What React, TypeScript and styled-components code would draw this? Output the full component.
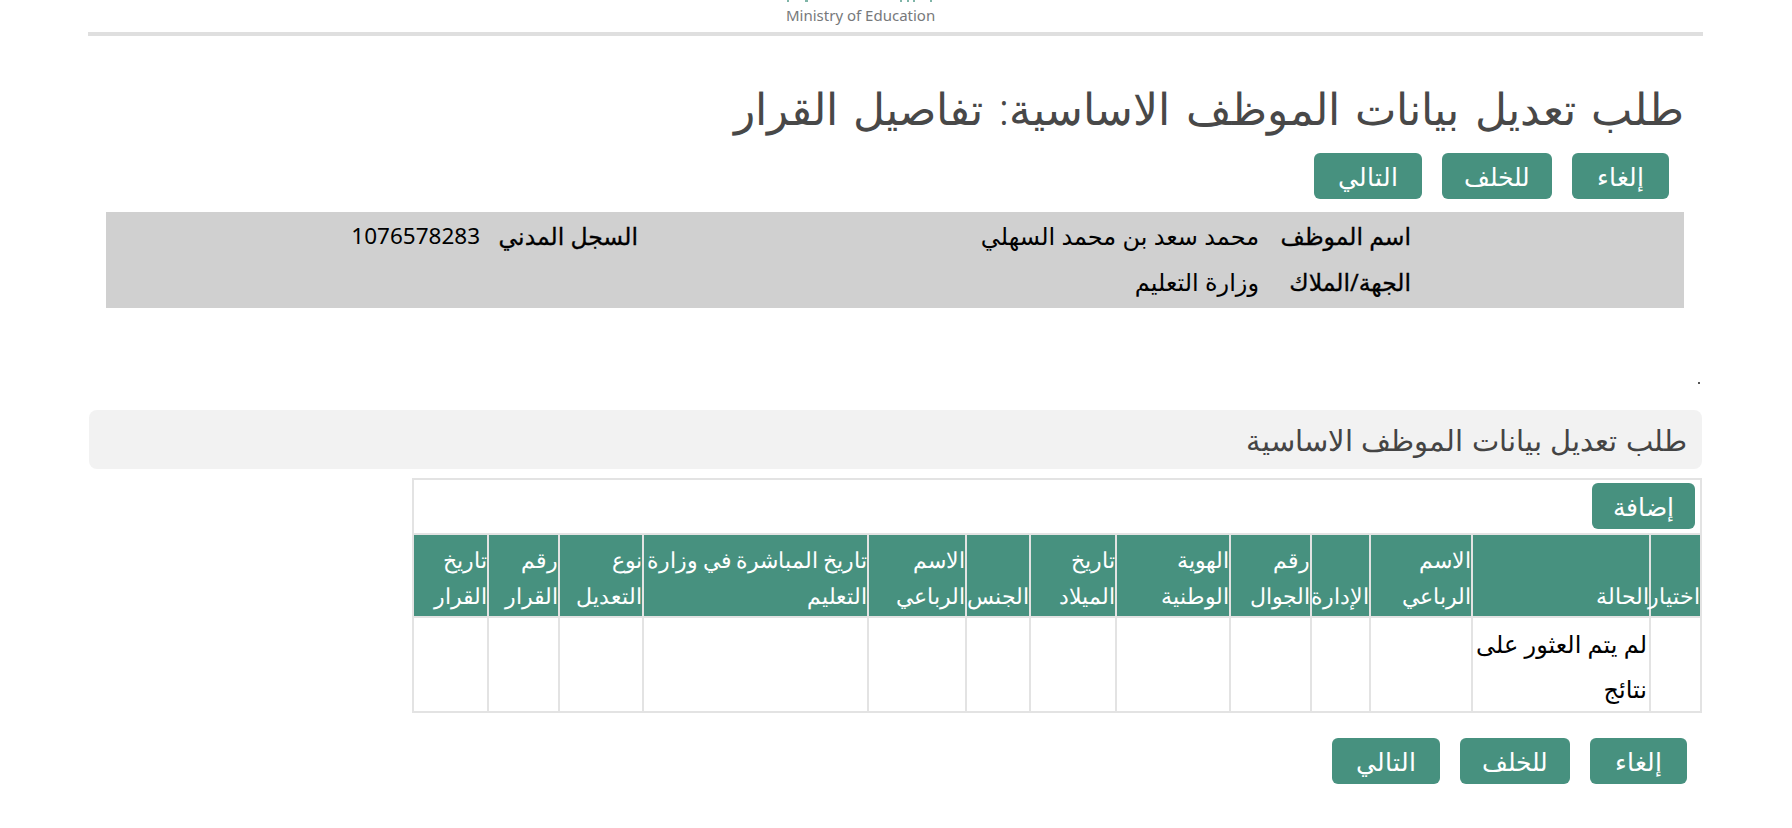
import { createGlobalStyle } from "styled-components";
import styled from "styled-components";

const GlobalStyle = createGlobalStyle`
  html, body {
    margin: 0;
    padding: 0;
    background: #fff;
  }
  body {
    font-family: "Noto Sans", "DejaVu Sans", sans-serif;
    color: #000;
  }
`;

const GREEN = "#47917f";
const LINE = "#e3e3e3";

const Page = styled.div`
  width: 1792px;
  height: 828px;
  overflow: hidden;
  box-sizing: border-box;
  padding: 0 89px 0 88px;
  direction: rtl;
`;

const Masthead = styled.header`
  height: 32px;
  border-bottom: 4px solid #dfdfdf;
  position: relative;
  direction: ltr;
  text-align: center;
`;

const LogoTops = styled.svg`
  display: block;
  position: absolute;
  left: 698px;
  top: 0;
`;

const Ministry = styled.span`
  position: absolute;
  left: 698px;
  top: 4px;
  width: 148px;
  font-size: 15px;
  line-height: 22px;
  color: #77797b;
  white-space: nowrap;
`;

const Title = styled.h1`
  margin: 45px 19px 0 0;
  height: 57px;
  font-size: 44px;
  word-spacing: 4px;
  line-height: 54px;
  font-weight: 300;
  color: #484848;
  white-space: nowrap;
`;

const ButtonRow = styled.div<{ $side: number; $gap: number }>`
  display: flex;
  gap: ${(p) => p.$gap}px;
  padding-right: ${(p) => p.$side}px;
`;

const TopButtons = styled(ButtonRow)`
  margin-top: 15px;
`;

const BottomButtons = styled(ButtonRow)`
  margin-top: 25px;
`;

const Btn = styled.button<{ $w: number }>`
  width: ${(p) => p.$w}px;
  height: 46px;
  padding: 0;
  border: 0;
  border-radius: 6px;
  background: ${GREEN};
  color: #fff;
  font-family: inherit;
  font-size: 25px;
  font-weight: 300;
  line-height: 46px;
`;

const InfoBar = styled.div`
  margin: 13px 19px 0 18px;
  height: 96px;
  background: #d0d0d0;
  display: grid;
  grid-template-columns: 273px 152px 621px 158px 1fr;
  grid-auto-rows: 46px;
  padding-top: 1px;
  box-sizing: border-box;
  font-size: 23.5px;
  line-height: 46px;
`;

const Spacer = styled.span``;

const InfoLabel = styled.b`
  font-weight: 400;
  -webkit-text-stroke: 0.3px #000;
  white-space: nowrap;
`;

const InfoValue = styled.span`
  white-space: nowrap;
  font-size: 24px;
`;

const NumberValue = styled(InfoValue)`
  font-size: 22.5px;
`;

const Dot = styled.div`
  height: 102px;
  display: flex;
  align-items: flex-end;
`;

const DotMark = styled.span`
  display: block;
  width: 2px;
  height: 2px;
  margin: 0 3px 26px 0;
  background: #555;
`;

const SectionBar = styled.div`
  height: 59px;
  margin: 0 1px;
  background: #f2f2f2;
  border-radius: 8px;
  box-sizing: border-box;
  padding-right: 15px;
  font-size: 29px;
  word-spacing: 1px;
  line-height: 59px;
  font-weight: 300;
  color: #444;
`;

const GridWrap = styled.div`
  width: 1290px;
  margin: 9px 1px 0 0;
  box-sizing: border-box;
  border: 2px solid ${LINE};
`;

const GridTools = styled.div`
  height: 53px;
  box-sizing: border-box;
  padding: 3px 5px 0 0;
`;

const Table = styled.table`
  width: 100%;
  table-layout: fixed;
  border-collapse: collapse;
`;

const HeadCell = styled.th`
  height: 83px;
  padding: 0 0 3px 0;
  box-sizing: border-box;
  background: ${GREEN};
  color: #fff;
  border: 2px solid ${LINE};
  font-size: 22px;
  word-spacing: -1px;
  line-height: 36px;
  font-weight: 300;
  text-align: right;
  vertical-align: bottom;
  &:first-child {
    border-right: 0;
  }
  &:last-child {
    border-left: 0;
  }
`;

const BodyCell = styled.td`
  height: 93px;
  padding: 3px 2px 0;
  box-sizing: border-box;
  border: 2px solid ${LINE};
  border-bottom: 0;
  font-size: 24px;
  line-height: 45px;
  vertical-align: top;
  text-align: right;
  &:first-child {
    border-right: 0;
  }
  &:last-child {
    border-left: 0;
  }
`;

const columns: { title: string; width: number }[] = [
  { title: "اختيار", width: 50 },
  { title: "الحالة", width: 178 },
  { title: "الاسم الرباعي", width: 102 },
  { title: "الإدارة", width: 59 },
  { title: "رقم الجوال", width: 81 },
  { title: "الهوية الوطنية", width: 114 },
  { title: "تاريخ الميلاد", width: 86 },
  { title: "الجنس", width: 64 },
  { title: "الاسم الرباعي", width: 98 },
  { title: "تاريخ المباشرة في وزارة التعليم", width: 225 },
  { title: "نوع التعديل", width: 84 },
  { title: "رقم القرار", width: 71 },
  { title: "تاريخ القرار", width: 74 },
];

function Actions() {
  return (
    <>
      <Btn $w={97}>إلغاء</Btn>
      <Btn $w={110}>للخلف</Btn>
      <Btn $w={108}>التالي</Btn>
    </>
  );
}

export default function App() {
  return (
    <Page>
      <GlobalStyle />
      <Masthead>
        <LogoTops width="148" height="3" viewBox="0 0 148 3">
          <rect x="1" y="0" width="2" height="2" fill="#7fb5a8" />
          <rect x="19" y="0" width="3" height="2" fill="#7fb5a8" />
          <rect x="114" y="0" width="2" height="2" fill="#7fb5a8" />
          <rect x="121" y="0" width="2" height="2" fill="#7fb5a8" />
          <rect x="127" y="0" width="2" height="2" fill="#7fb5a8" />
          <rect x="144" y="0" width="2" height="2" fill="#7fb5a8" />
        </LogoTops>
        <Ministry>Ministry of Education</Ministry>
      </Masthead>
      <Title>طلب تعديل بيانات الموظف الاساسية: تفاصيل القرار</Title>
      <TopButtons $side={34} $gap={20}>
        <Actions />
      </TopButtons>
      <InfoBar>
        <Spacer />
        <InfoLabel>اسم الموظف</InfoLabel>
        <InfoValue>محمد سعد بن محمد السهلي</InfoValue>
        <InfoLabel>السجل المدني</InfoLabel>
        <NumberValue>1076578283</NumberValue>
        <Spacer />
        <InfoLabel>الجهة/الملاك</InfoLabel>
        <InfoValue>وزارة التعليم</InfoValue>
      </InfoBar>
      <Dot>
        <DotMark />
      </Dot>
      <SectionBar>طلب تعديل بيانات الموظف الاساسية</SectionBar>
      <GridWrap>
        <GridTools>
          <Btn $w={103}>إضافة</Btn>
        </GridTools>
        <Table>
          <colgroup>
            {columns.map((c, i) => (
              <col key={i} style={{ width: c.width }} />
            ))}
          </colgroup>
          <thead>
            <tr>
              {columns.map((c, i) => (
                <HeadCell key={i}>{c.title}</HeadCell>
              ))}
            </tr>
          </thead>
          <tbody>
            <tr>
              {columns.map((c, i) => (
                <BodyCell key={i}>{i === 1 ? "لم يتم العثور على نتائج" : ""}</BodyCell>
              ))}
            </tr>
          </tbody>
        </Table>
      </GridWrap>
      <BottomButtons $side={16} $gap={20}>
        <Actions />
      </BottomButtons>
    </Page>
  );
}
